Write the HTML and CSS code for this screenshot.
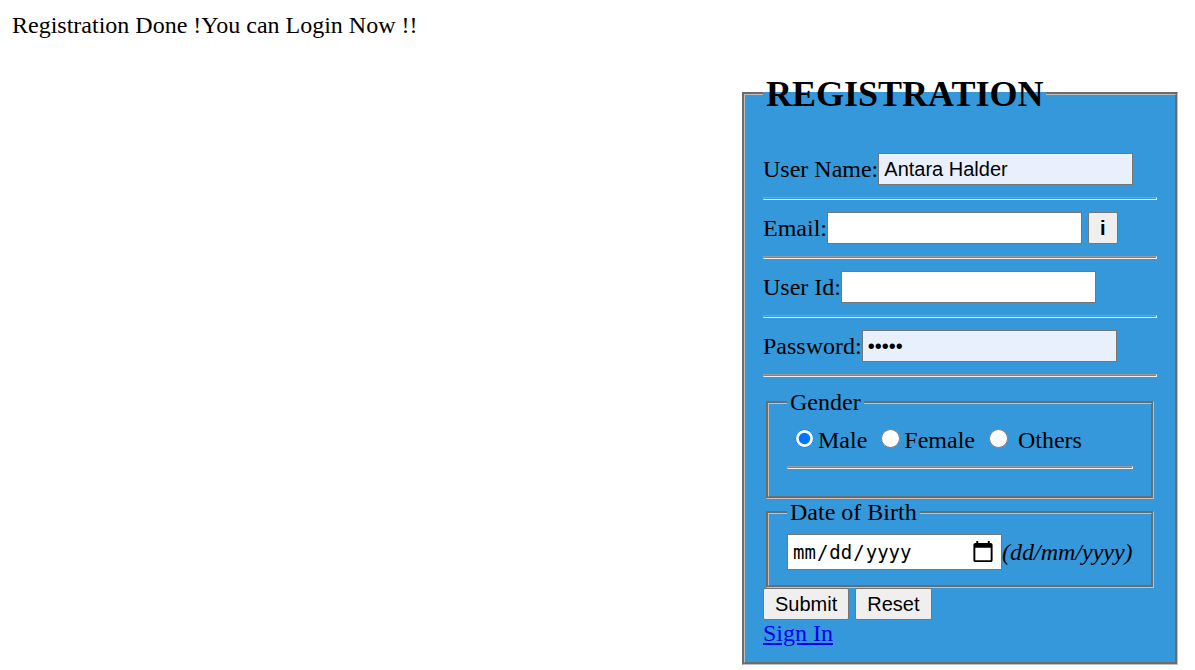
FILE: index.html
```html
<!DOCTYPE html>
<html lang="en">
<head>
<meta charset="utf-8">
<title>Registration</title>
<link rel="stylesheet" href="styles.css">
</head>
<body>
<p class="message">Registration Done !You can Login Now !!</p>
<form class="registration">
  <fieldset class="panel">
    <legend class="title">REGISTRATION</legend>
    <div class="row"><label for="name">User Name:</label><input class="field filled" id="name" type="text" value="Antara Halder"></div>
    <hr class="rule">
    <div class="row"><label for="email">Email:</label><input class="field" id="email" type="email"><button class="button info" type="button"><b>i</b></button></div>
    <hr class="rule">
    <div class="row"><label for="userid">User Id:</label><input class="field" id="userid" type="text"></div>
    <hr class="rule">
    <div class="row"><label for="password">Password:</label><input class="field filled" id="password" type="password" value="12345"></div>
    <hr class="rule">
    <fieldset class="group">
      <legend class="caption">Gender</legend>
      <div class="choices">
        <input class="radio" type="radio" name="gender" id="male" checked><label for="male">Male</label>
        <input class="radio" type="radio" name="gender" id="female"><label for="female">Female</label>
        <input class="radio" type="radio" name="gender" id="others"> <label for="others">Others</label>
      </div>
      <hr class="rule">
    </fieldset>
    <fieldset class="group">
      <legend class="caption">Date of Birth</legend>
      <div class="row"><input class="date" type="date" aria-label="Date of Birth"><i>(dd/mm/yyyy)</i></div>
    </fieldset>
    <div class="row actions">
      <button class="button" type="submit">Submit</button>
      <button class="button" type="reset">Reset</button>
    </div>
    <a class="signin" href="#">Sign In</a>
  </fieldset>
</form>
</body>
</html>
```
FILE: styles.css
```css
* {
  box-sizing: border-box;
}

body {
  margin: 12px 17px 0 12px;
  background: #fff;
  color: #000;
  font: 24px/27px "Liberation Serif", "Times New Roman", serif;
}

.message {
  margin: 0 0 34px;
}

.registration {
  display: flex;
  justify-content: flex-end;
}

.panel {
  width: 436px;
  max-width: 100%;
  margin: 0;
  padding: 8px 18px 15px;
  border: 3px groove #c0c0c0;
  background: #3498db;
}

.title {
  margin-bottom: 31px;
  padding: 2px 3px 0;
  font-size: 36px;
  font-weight: bold;
  line-height: 39px;
}

.row {
  display: flex;
  align-items: center;
}

.rule {
  height: 3px;
  margin: 12px 0;
  border: 1px inset #eee;
}

.field {
  width: 255px;
  height: 32px;
  padding: 2px 5px;
  border: 1px solid #767676;
  background: #fff;
  color: #000;
  font: 20px "Liberation Sans", Arial, sans-serif;
}

.filled {
  background: #e8f0fe;
}

.button {
  height: 32px;
  padding: 0 11px;
  border: 1px solid #767676;
  border-radius: 2px;
  background: #efefef;
  color: #000;
  font: 20px "Liberation Sans", Arial, sans-serif;
}

.info {
  margin-left: 6px;
}

.group {
  margin: 0 3px;
  padding: 8px 18px 15px;
  border: 3px groove #c0c0c0;
}

.caption {
  padding: 0 3px;
}

.choices {
  padding-top: 3px;
  line-height: 27px;
}

.radio {
  width: 19px;
  height: 19px;
  margin: 0 4px 1px 8px;
}

.date {
  width: 215px;
  height: 36px;
  padding: 2px 4px;
  border: 1px solid #767676;
  background: #fff;
  color: #000;
  font: 19px "DejaVu Sans Mono", monospace;
}

.date::-webkit-calendar-picker-indicator {
  width: 24px;
  height: 24px;
  margin-right: 2px;
  padding: 0;
}

.actions {
  gap: 6px;
}

.signin {
  color: #00e;
}
```
